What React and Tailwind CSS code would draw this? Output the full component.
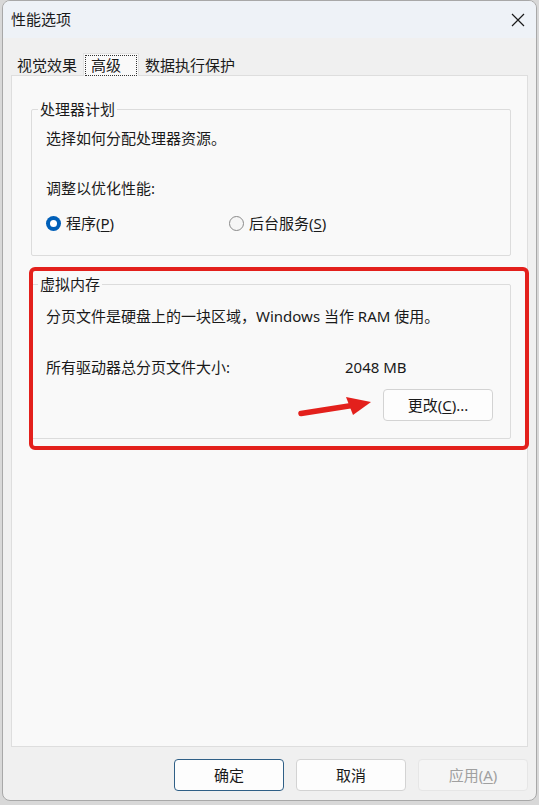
import React from 'react';

const font = "font-['Noto_Sans','Noto_Sans_CJK_SC',sans-serif]";

function Radio({ checked, label, hotkey }) {
    return (
        <div className="flex items-center h-[20px]">
            {checked ? (
                <span className="w-[15px] h-[15px] rounded-full bg-[#005fb8] flex items-center justify-center">
                    <span className="w-[7px] h-[7px] rounded-full bg-white" />
                </span>
            ) : (
                <span className="w-[15px] h-[15px] rounded-full border border-[#8a8a8a] bg-[#f6f6f6]" />
            )}
            <span className="ml-[5px]">
                {label}(<span className="underline underline-offset-2">{hotkey}</span>)
            </span>
        </div>
    );
}

function Group({ title, className, children }) {
    return (
        <fieldset className={`border border-[#dcdcdc] rounded-[2px] ${className}`}>
            <legend className="ml-[6px] px-[2px] leading-[20px] text-[#1a1a1a]">{title}</legend>
            <div className="px-[14px]">{children}</div>
        </fieldset>
    );
}

function Button({ children, variant }) {
    const styles = {
        default: 'bg-[#fdfdfd] border-[#2f5f86] text-[#1a1a1a]',
        normal: 'bg-[#fdfdfd] border-[#d3d3d3] text-[#1a1a1a]',
        disabled: 'bg-[#f5f5f5] border-[#e6e6e6] text-[#a0a0a0]',
    };
    return (
        <button className={`w-[110px] h-[32px] rounded-[4px] border text-center ${styles[variant || 'normal']}`}>
            {children}
        </button>
    );
}

export default function App() {
    return (
        <div className={`relative w-[539px] h-[805px] bg-[#d8d8d8] px-[2px] pb-[4px] text-[15px] text-[#1a1a1a] ${font}`}>
            <div className="h-full flex flex-col bg-[#f0f0f0] border border-[#a8a8a8] rounded-[8px] overflow-hidden">
                {/* title bar */}
                <div className="h-[37px] shrink-0 bg-[#eef2f7] flex items-center justify-between pl-[8px] pr-[11px]">
                    <span className="text-[15px]">性能选项</span>
                    <svg width="14" height="14" viewBox="0 0 14 14" className="text-[#1a1a1a]">
                        <path d="M1 1 L13 13 M13 1 L1 13" stroke="currentColor" strokeWidth="1.2" />
                    </svg>
                </div>

                <div className="px-[8px] pt-[14px]">
                    {/* tabs */}
                    <div className="flex items-end h-[23px]">
                        <div className="pl-[6px] pr-[6px] leading-[20px]">视觉效果</div>
                        <div className="h-[23px] bg-[#f9f9f9] border border-b-0 border-[#e3e3e3] px-[1px] pt-[1px] relative z-10 -mb-px">
                            <div className="h-[21px] border border-dotted border-[#333] pl-[5px] pr-[15px] leading-[19px]">高级</div>
                        </div>
                        <div className="pl-[6px] leading-[20px]">数据执行保护</div>
                    </div>

                    {/* tab page */}
                    <div className="h-[672px] border border-[#dedede] bg-[#f9f9f9] pt-[23px] pl-[19px] pr-[16px]">
                        <Group title="处理器计划" className="pb-[22px]">
                            <div className="mt-[9px] leading-[20px]">选择如何分配处理器资源。</div>
                            <div className="mt-[30px] leading-[20px]">调整以优化性能:</div>
                            <div className="mt-[15px] flex">
                                <div className="w-[183px]">
                                    <Radio checked label="程序" hotkey="P" />
                                </div>
                                <Radio label="后台服务" hotkey="S" />
                            </div>
                        </Group>

                        <Group title="虚拟内存" className="mt-[18px] pb-[17px]">
                            <div className="mt-[12px] leading-[20px]">分页文件是硬盘上的一块区域，Windows 当作 RAM 使用。</div>
                            <div className="mt-[31px] flex leading-[20px]">
                                <span className="w-[299px]">所有驱动器总分页文件大小:</span>
                                <span>2048 MB</span>
                            </div>
                            <div className="mt-[12px] flex justify-end pr-[3px]">
                                <Button>
                                    更改(<span className="underline underline-offset-2">C</span>)...
                                </Button>
                            </div>
                        </Group>
                    </div>
                </div>

                {/* dialog buttons */}
                <div className="flex justify-end gap-[12px] pr-[8px] pt-[12px]">
                    <Button variant="default">确定</Button>
                    <Button>取消</Button>
                    <Button variant="disabled">
                        应用(<span className="underline underline-offset-2">A</span>)
                    </Button>
                </div>
            </div>

            {/* callout around the virtual memory group */}
            <div className="absolute left-[29px] top-[267px] w-[500px] h-[183px] border-[4px] border-[#e3201c] rounded-[6px] pointer-events-none" />
            <svg className="absolute left-[296px] top-[393px] pointer-events-none" width="80" height="26" viewBox="0 0 80 26">
                <path d="M5 20.5 L56 12.5" stroke="#e3201c" strokeWidth="5.5" strokeLinecap="round" />
                <polygon points="50,4 75,9 57,22" fill="#e3201c" />
            </svg>
        </div>
    );
}
